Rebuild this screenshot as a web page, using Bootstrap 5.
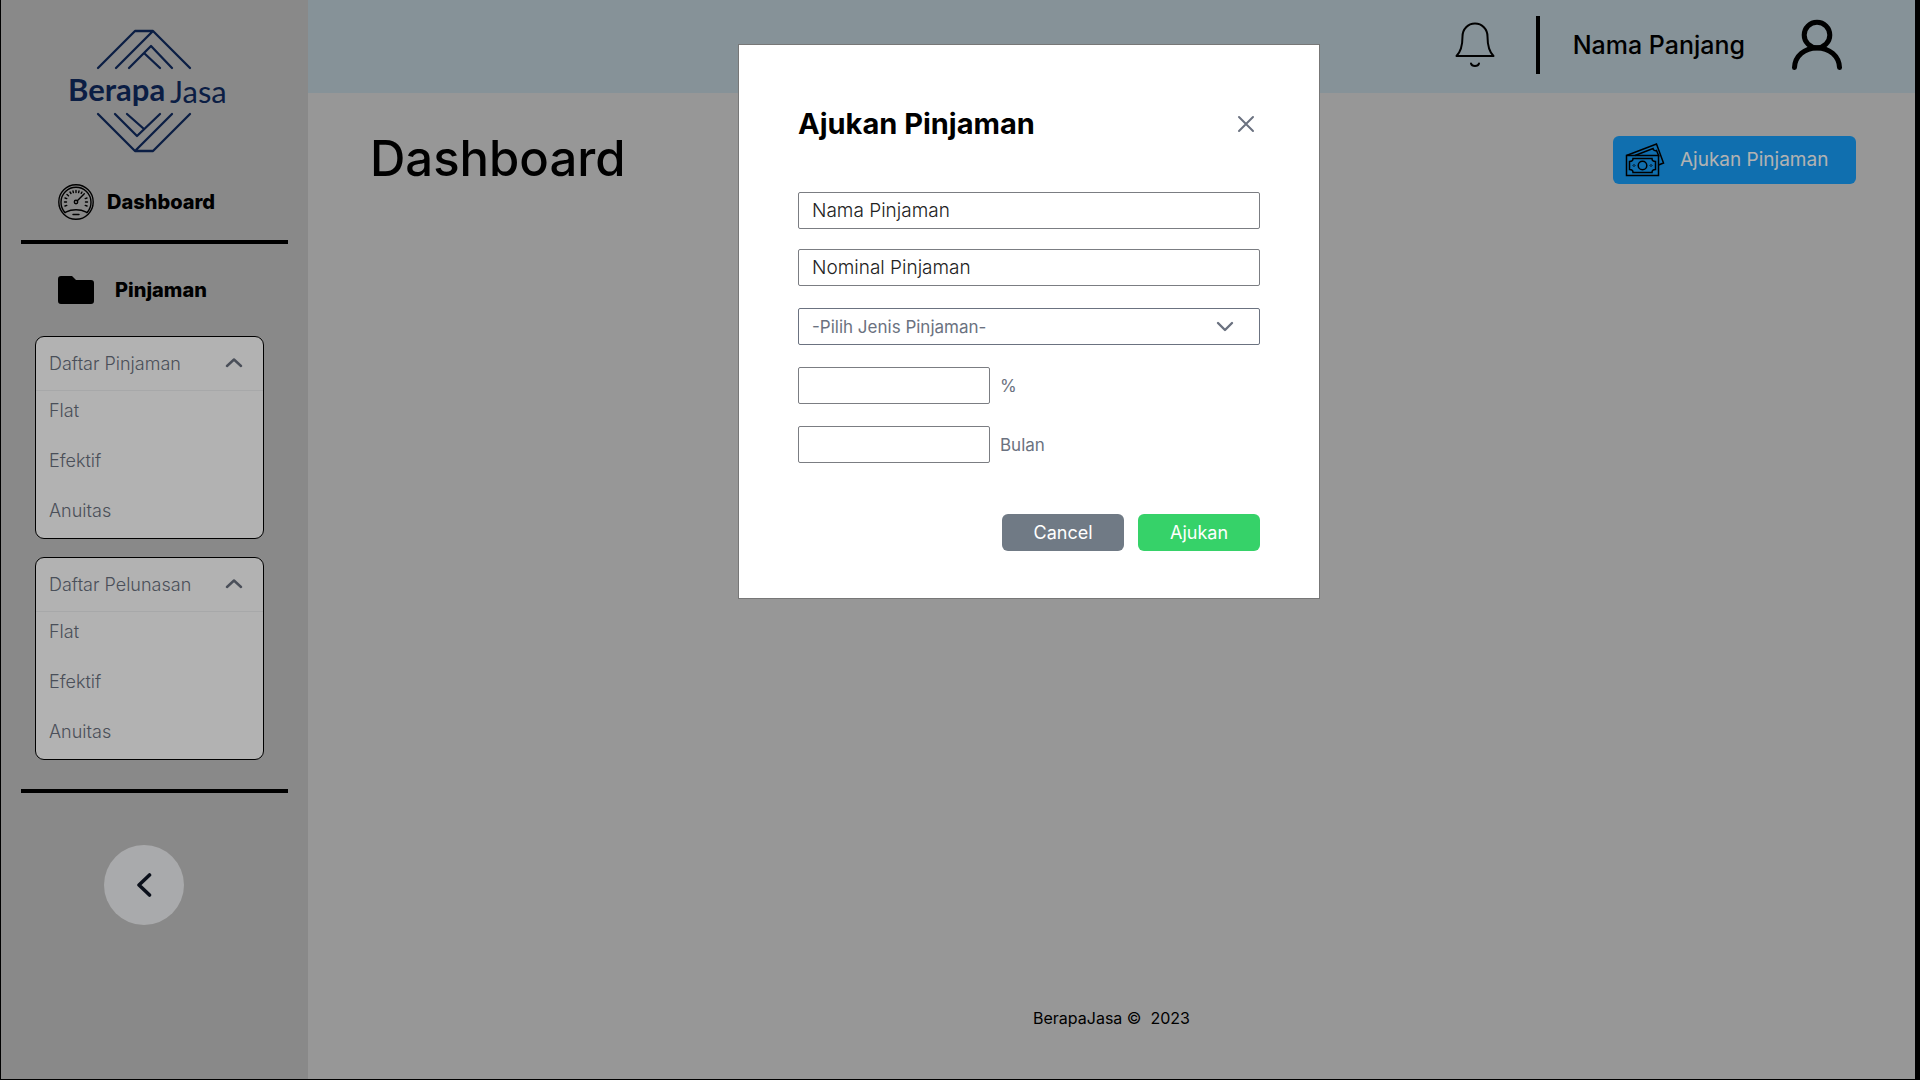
<!DOCTYPE html>
<html lang="id">
<head>
<meta charset="utf-8">
<meta name="viewport" content="width=device-width, initial-scale=1">
<title>BerapaJasa - Dashboard</title>
<link href="https://cdn.jsdelivr.net/npm/bootstrap@5.3.0/dist/css/bootstrap.min.css" rel="stylesheet">
<style>
  body { background: #000; color: #000; font-family: Inter, "Noto Sans", sans-serif; font-size: 18px; line-height: 24px; }
  .app-shell { min-height: 100vh; padding: 0 5px 1px 1px; }

  /* Sidebar */
  .side-panel { width: 307px; background: #c5c5c5; padding: 29px 20px 0; }
  .brand-logo { margin-left: 48px; }
  .side-link { color: #000; font-size: 20px; font-weight: 800; padding-left: 37px; }
  .side-link:hover { color: #000; }
  .link-dash { gap: 13px; margin: 28px 0 20px; height: 37px; }
  .link-loan { gap: 21px; margin: 27px 0 28px; height: 37px; }
  .side-rule { height: 4px; margin: 0; border: 0; background: #000; opacity: 1; }
  .menu-box { background: #fff; border: 1px solid #000; border-radius: 9px; margin: 0 24px 18px 14px; color: #6b7280; font-weight: 300; }
  .menu-head { height: 54px; padding: 0 20px 0 13px; border-bottom: 1px solid #f0f1f3; color: inherit; font-size: 18px; font-weight: inherit; }
  .menu-items { gap: 26px; padding: 8px 13px 15px; }
  .menu-items a { color: inherit; }
  .menu-box + .side-rule { margin-top: 29px; }
  .back-btn { width: 80px; height: 80px; background: #f3f4f6; margin: 52px 0 40px 83px; }

  /* Main area */
  .main-area { background: #d9d9d9; min-width: 0; }
  .top-bar { height: 93px; background: #c1d2da; padding: 0 73px 4px 24px; }
  .bell-btn { margin-right: 41px; }
  .bar-split { width: 4px; height: 58px; background: #000; margin-right: 33px; }
  .user-name { font-size: 25px; font-weight: 500; margin-right: 47px; }
  .page-head { padding: 36px 59px 0 62px; }
  .page-title { font-size: 49px; line-height: 60px; font-weight: 500; padding-bottom: 2px; }
  .loan-btn { width: 243px; height: 48px; background: #179ffb; color: #fff; border-radius: 6px; padding: 0 0 0 12px; gap: 15px; font-size: 19px; }
  .page-foot { font-size: 16px; padding: 40px 0 49px; white-space: pre; }

  /* Dialog */
  .modal-backdrop.show { opacity: .3; }
  .loan-dialog { max-width: 582px; margin-top: 44px; }
  .loan-content { border: 1px solid #777; border-radius: 0; padding: 61px 59px 47px; }
  .dialog-title { font-size: 29px; line-height: 36px; font-weight: 700; }
  .dialog-head { margin-bottom: 50px; }
  .field-stack { gap: 22px; }
  .field-pair { gap: 20px; }
  .field-stack .form-control, .field-stack .form-select { height: 37px; border: 1px solid #7b7d82; border-radius: 2px; padding: 0 13px; font-size: 19px; font-weight: 300; line-height: 24px; }
  .field-stack .form-control::placeholder { color: #222; opacity: 1; }
  .field-stack .form-select {
    color: #6b7280; font-size: 17px; font-weight: 400; padding-right: 52px; border-color: #6b7280;
    background-image: url("data:image/svg+xml,%3csvg xmlns='http://www.w3.org/2000/svg' viewBox='0 0 18 18'%3e%3cpath d='M2 5l7 7 7-7' fill='none' stroke='%236b7280' stroke-width='2.4' stroke-linecap='round' stroke-linejoin='round'/%3e%3c/svg%3e");
    background-position: right 25px center; background-size: 18px 18px;
  }
  .field-stack .short-field { width: 192px; }
  .unit-text { color: #6b7280; font-size: 17px; margin-left: 10px; }
  .dialog-actions { gap: 14px; margin-top: 51px; }
  .act-btn { width: 122px; height: 37px; padding: 0; border-radius: 6px; color: #fff; font-size: 18px; }
  .act-btn:hover { color: #fff; }
  .act-cancel { background: #707a85; }
  .act-send { background: #36d269; }
  @media (min-width: 1400px) { .loan-modal { padding-left: 138px; } }
</style>
</head>
<body>
<div class="app-shell d-flex">
  <aside class="side-panel flex-shrink-0">
    <a href="#" class="d-block brand-logo" aria-label="BerapaJasa">
      <svg class="d-block" width="162" height="126" viewBox="0 0 162 126" fill="none" stroke="#112c62" stroke-width="2.300" stroke-linecap="round" stroke-linejoin="round">
        <path d="M29 39L66 2h18l37 37M47 39L83 3M60 39l22-22 21 22M75 24l16 15"/>
        <path d="M29 85l37 37h18l37-37M103 85l-36 36M46 85l22 22 23-22M58 85l17 15"/>
        <g fill="#112c62" stroke="none" font-family="Lato, sans-serif" font-size="31">
          <text x="-1" y="72" font-weight="700">Berapa</text>
          <text x="101" y="74">Jasa</text>
        </g>
      </svg>
    </a>
    <a href="#" class="side-link link-dash d-flex align-items-center text-decoration-none">
      <svg width="36" height="36" viewBox="0 0 36 36" fill="none" stroke="#000" stroke-width="1.400" stroke-linecap="round">
        <circle cx="18" cy="18" r="17.200"/>
        <path d="M7 28.500A15 15 0 1 1 29 28.500"/>
        <path d="M7 28.500c3-1.500 4-2.800 11-2.800s8 1.300 11 2.800M15 30.500h6"/>
        <circle cx="18" cy="18" r="1.700"/><path d="M19.300 16.700l7-7"/>
        <path d="M6.500 18h2M7 14l1.800.6M7 22l1.800-.6M9 10.500l1.500 1.200M12 8l1 1.500M15 7l.4 1.600M18 6.500v2M21 7l-.4 1.600M24 8l-.8 1.300M29.500 18h-2M29 14l-1.800.6M29 22l-1.800-.6"/>
      </svg>
      <span>Dashboard</span>
    </a>
    <hr class="side-rule">
    <a href="#" class="side-link link-loan d-flex align-items-center text-decoration-none">
      <svg width="36" height="28" viewBox="0 0 36 28"><path d="M3 0h11l4 4h15a3 3 0 0 1 3 3v18a3 3 0 0 1-3 3H3a3 3 0 0 1-3-3V3a3 3 0 0 1 3-3z"/></svg>
      <span>Pinjaman</span>
    </a>
    <section class="menu-box">
      <button type="button" class="menu-head btn w-100 rounded-0 border-top-0 border-start-0 border-end-0 d-flex align-items-center justify-content-between" aria-expanded="true">
        <span>Daftar Pinjaman</span>
        <svg width="18" height="12" viewBox="0 0 18 12" fill="none" stroke="#6b7280" stroke-width="2.400" stroke-linecap="round" stroke-linejoin="round"><path d="M2 8l7-6.500L16 8"/></svg>
      </button>
      <nav class="menu-items d-flex flex-column">
        <a href="#" class="text-decoration-none">Flat</a>
        <a href="#" class="text-decoration-none">Efektif</a>
        <a href="#" class="text-decoration-none">Anuitas</a>
      </nav>
    </section>
    <section class="menu-box">
      <button type="button" class="menu-head btn w-100 rounded-0 border-top-0 border-start-0 border-end-0 d-flex align-items-center justify-content-between" aria-expanded="true">
        <span>Daftar Pelunasan</span>
        <svg width="18" height="12" viewBox="0 0 18 12" fill="none" stroke="#6b7280" stroke-width="2.400" stroke-linecap="round" stroke-linejoin="round"><path d="M2 8l7-6.500L16 8"/></svg>
      </button>
      <nav class="menu-items d-flex flex-column">
        <a href="#" class="text-decoration-none">Flat</a>
        <a href="#" class="text-decoration-none">Efektif</a>
        <a href="#" class="text-decoration-none">Anuitas</a>
      </nav>
    </section>
    <hr class="side-rule">
    <button type="button" class="back-btn btn rounded-circle border-0 p-0 d-flex align-items-center justify-content-center" aria-label="Kembali">
      <svg width="16" height="26" viewBox="0 0 16 26" fill="none" stroke="#111827" stroke-width="3.600" stroke-linecap="round" stroke-linejoin="round"><path d="M13.500 3L3 13l10.500 10"/></svg>
    </button>
  </aside>

  <div class="main-area d-flex flex-column flex-grow-1">
    <header class="top-bar d-flex align-items-center justify-content-end">
      <button type="button" class="bell-btn btn border-0 p-0 d-flex" aria-label="Notifikasi">
        <svg width="40" height="46" viewBox="0 0 40 46" fill="none" stroke="#000" stroke-width="2" stroke-linecap="round" stroke-linejoin="round">
          <path d="M1.500 34C6 29.500 7.500 24 7.500 14.500C7.500 7 13 1.500 20 1.500S32.500 7 32.500 14.500C32.500 24 34 29.500 38.500 34z"/>
          <path d="M16 41.500c1 3.400 7 3.400 8 0"/>
        </svg>
      </button>
      <div class="bar-split"></div>
      <span class="user-name">Nama Panjang</span>
      <svg width="50" height="52" viewBox="0 0 50 52" fill="none" stroke="#000" stroke-width="5" stroke-linecap="round"><circle cx="25" cy="16" r="12.800"/><path d="M2.500 48.500C3 37 12.500 29 25 29s22 8 22.500 19.500"/></svg>
    </header>
    <main class="page-head d-flex align-items-center justify-content-between">
      <h1 class="page-title mb-0">Dashboard</h1>
      <button type="button" class="loan-btn btn border-0 d-flex align-items-center">
        <svg width="40" height="34" viewBox="0 0 40 34" fill="none" stroke="#000" stroke-width="1.500">
          <path d="M1.500 12.500h32v20h-32z"/>
          <path d="M1.500 12.500L31.500 1l7 19-5 2M10 12.500L28 5.500c.5 2 2 2.500 3.500 2l2.500 6"/>
          <path d="M8 15.500h19c0 2 1.500 3 3.500 3v8c-2 0-3.500 1-3.500 3H8c0-2-1.500-3-3.500-3v-8c2 0 3.500-1 3.500-3z"/>
          <circle cx="17.500" cy="22.500" r="4.300"/><path d="M9 21.500l1 1-1 1-1-1zM26 21.500l1 1-1 1-1-1z" stroke-width="1"/>
        </svg>
        <span>Ajukan Pinjaman</span>
      </button>
    </main>
    <footer class="page-foot mt-auto text-center">BerapaJasa ©  2023</footer>
  </div>
</div>

<div class="modal-backdrop show"></div>
<div class="modal loan-modal show d-block" tabindex="-1" role="dialog" aria-modal="true" aria-labelledby="dialogTitle">
  <div class="modal-dialog loan-dialog">
    <form class="modal-content loan-content">
      <div class="dialog-head d-flex align-items-center justify-content-between">
        <h2 class="dialog-title mb-0" id="dialogTitle">Ajukan Pinjaman</h2>
        <button type="button" class="btn border-0 p-0 me-1 d-flex" aria-label="Tutup">
          <svg width="20" height="20" viewBox="0 0 20 20" fill="none" stroke="#6b7280" stroke-width="2" stroke-linecap="round"><path d="M3 3l14 14M17 3L3 17"/></svg>
        </button>
      </div>
      <div class="field-stack d-flex flex-column">
        <div class="field-pair d-flex flex-column">
          <input type="text" class="form-control" placeholder="Nama Pinjaman" aria-label="Nama Pinjaman">
          <input type="text" class="form-control" placeholder="Nominal Pinjaman" aria-label="Nominal Pinjaman">
        </div>
        <select class="form-select" aria-label="Jenis Pinjaman">
          <option>-Pilih Jenis Pinjaman-</option>
        </select>
        <div class="d-flex align-items-center">
          <input type="text" class="form-control short-field" id="rate">
          <label class="unit-text" for="rate">%</label>
        </div>
        <div class="d-flex align-items-center">
          <input type="text" class="form-control short-field" id="months">
          <label class="unit-text" for="months">Bulan</label>
        </div>
      </div>
      <div class="dialog-actions d-flex justify-content-end">
        <button type="button" class="act-btn act-cancel btn border-0">Cancel</button>
        <button type="submit" class="act-btn act-send btn border-0">Ajukan</button>
      </div>
    </form>
  </div>
</div>
<script src="https://cdn.jsdelivr.net/npm/bootstrap@5.3.0/dist/js/bootstrap.bundle.min.js"></script>
</body>
</html>
